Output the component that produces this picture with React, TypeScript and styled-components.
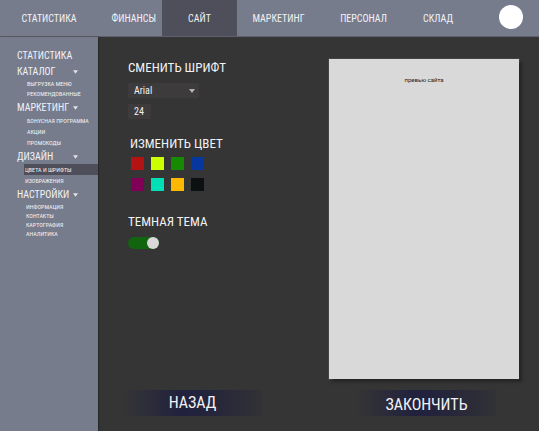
import React, { useState } from "react";
import styled, { createGlobalStyle } from "styled-components";

const GlobalStyle = createGlobalStyle`
  *, *::before, *::after { box-sizing: border-box; }
  body {
    margin: 0;
    background: #353535;
    color: #f2f2f4;
    font-family: "Roboto Condensed", "Roboto", sans-serif;
  }
  button, select, input { font-family: inherit; color: inherit; }
  a { color: inherit; text-decoration: none; }
`;

const Page = styled.div`
  min-height: 100vh;
  display: flex;
  flex-direction: column;
`;

const TopBar = styled.header`
  height: 37px;
  display: grid;
  grid-template-columns: 98fr 64fr 75fr 83fr 87fr 62fr 70fr;
  background: #777c8d;
  border-bottom: 1px solid #5e616c;
`;

const Tab = styled.a<{ $active?: boolean; $end?: boolean }>`
  display: flex;
  align-items: center;
  justify-content: ${(p) => (p.$end ? "flex-end" : "center")};
  padding-right: ${(p) => (p.$end ? "6px" : "0")};
  background: ${(p) => (p.$active ? "#4e4f5b" : "transparent")};
  font-size: 10px;
  white-space: nowrap;
`;

const Avatar = styled.button`
  width: 24px;
  height: 24px;
  margin: 5px 16px 0 auto;
  padding: 0;
  border: 0;
  border-radius: 50%;
  background: #fff;
`;

const Body = styled.div`
  flex: 1;
  display: flex;
`;

const Sidebar = styled.nav`
  flex: 0 0 98px;
  min-width: 0;
  display: flex;
  flex-direction: column;
  gap: 2px;
  padding-top: 12px;
  background: #777c8d;
  box-shadow: 1px 0 1px #292929;
`;

const GroupHead = styled.button`
  width: 100%;
  height: 14px;
  display: flex;
  align-items: center;
  justify-content: space-between;
  padding: 0 20px 0 17px;
  border: 0;
  background: none;
  font-size: 10px;
  line-height: 14px;
`;

const Caret = styled.svg`
  width: 5px;
  height: 4px;
  fill: #e2e2e6;
`;

const SubLink = styled.a<{ $row: number; $inset: number; $active?: boolean }>`
  display: block;
  height: ${(p) => p.$row}px;
  margin-left: 24px;
  padding-left: ${(p) => p.$inset}px;
  background: ${(p) => (p.$active ? "#4e4f5b" : "transparent")};
  font-size: 6px;
  line-height: ${(p) => p.$row}px;
  white-space: nowrap;
`;

const Main = styled.main`
  flex: 1;
  display: flex;
  flex-direction: column;
`;

const Workspace = styled.div`
  flex: 1;
  display: grid;
  grid-template-columns: 201fr 190fr;
  padding: 22px 20px 0 30px;
`;

const Settings = styled.div`
  display: flex;
  flex-direction: column;
  align-items: flex-start;
`;

const Section = styled.section<{ $palette?: boolean }>`
  display: flex;
  flex-direction: column;
  align-items: flex-start;
  gap: ${(p) => (p.$palette ? "4px" : "6px")};
  margin-bottom: ${(p) => (p.$palette ? "22px" : "16px")};
  padding-left: ${(p) => (p.$palette ? "2px" : "0")};
`;

const Heading = styled.h2`
  margin: 0;
  font-size: 13px;
  font-weight: 400;
  line-height: 18px;
`;

const SelectBox = styled.div`
  position: relative;
  width: 71px;
`;

const FontSelect = styled.select`
  display: block;
  width: 100%;
  height: 15px;
  padding: 0 6px;
  border: 0;
  border-radius: 0;
  appearance: none;
  background: #3e3b3d;
  font-size: 10px;
  line-height: 15px;
`;

const SelectCaret = styled(Caret)`
  position: absolute;
  right: 4px;
  top: 6px;
  width: 6px;
  fill: #b4b4b4;
  pointer-events: none;
`;

const SizeInput = styled.input`
  width: 23px;
  height: 15px;
  padding: 0 6px;
  border: 0;
  background: #3e3b3d;
  font-size: 10px;
`;

const Swatches = styled.div`
  display: grid;
  grid-template-columns: repeat(4, 13px);
  gap: 8px 7px;
  margin-left: 1px;
`;

const Swatch = styled.button<{ $color: string }>`
  height: 13px;
  padding: 0;
  border: 0;
  background: ${(p) => p.$color};
`;

const Switch = styled.input`
  appearance: none;
  width: 31px;
  height: 12px;
  margin: 0;
  padding: 0;
  display: flex;
  border-radius: 6px;
  background: #12650f;
  justify-content: flex-start;

  &:checked { justify-content: flex-end; }

  &::before {
    content: "";
    width: 12px;
    height: 12px;
    border-radius: 50%;
    background: #d9d9d9;
  }
`;

const Preview = styled.section`
  min-height: 320px;
  padding-top: 16px;
  background: #d9d9d9;
  box-shadow: 3px 3px 3px #252525, 0 0 0 1px #444;
  color: #222;
  font-family: "Roboto", sans-serif;
  font-size: 6px;
  line-height: 10px;
  text-align: center;
`;

const Actions = styled.footer`
  display: flex;
  justify-content: space-between;
  padding: 11px 42px 15px 24px;
`;

const ActionButton = styled.button<{ $low?: boolean }>`
  width: 141px;
  height: 26px;
  padding: ${(p) => (p.$low ? "3px" : "0")} 0 0;
  border: 0;
  background: linear-gradient(90deg, #353535 0%, #2c2c3a 20%, #21213e 42%, #23233c 56%, #313136 98%, #353535 100%);
  font-size: 16px;
  line-height: 22px;
`;

const tabs = ["СТАТИСТИКА", "ФИНАНСЫ", "САЙТ", "МАРКЕТИНГ", "ПЕРСОНАЛ", "СКЛАД"];

const groups = [
  { title: "СТАТИСТИКА", row: 10, inset: 3, items: [] as string[] },
  { title: "КАТАЛОГ", row: 10, inset: 3, items: ["ВЫГРУЗКА МЕНЮ", "РЕКОМЕНДОВАННЫЕ"] },
  { title: "МАРКЕТИНГ", row: 11, inset: 3, items: ["БОНУСНАЯ ПРОГРАММА", "АКЦИИ", "ПРОМОКОДЫ"] },
  { title: "ДИЗАЙН", row: 11, inset: 1, items: ["ЦВЕТА И ШРИФТЫ", "ИЗОБРАЖЕНИЯ"] },
  { title: "НАСТРОЙКИ", row: 9, inset: 2, items: ["ИНФОРМАЦИЯ", "КОНТАКТЫ", "КАРТОГРАФИЯ", "АНАЛИТИКА"] },
];

const colors = ["#b31312", "#ccff00", "#168a00", "#05379f", "#800058", "#00dfb5", "#ffb800", "#0d1010"];

export default function App() {
  const [dark, setDark] = useState(true);
  return (
    <Page>
      <GlobalStyle />
      <TopBar>
        {tabs.map((tab) => (
          <Tab key={tab} href="#" $active={tab === "САЙТ"} $end={tab === "ФИНАНСЫ"}>{tab}</Tab>
        ))}
        <Avatar aria-label="Профиль" />
      </TopBar>
      <Body>
        <Sidebar>
          {groups.map((group) => (
            <div key={group.title}>
              <GroupHead>
                {group.title}
                {group.items.length > 0 && (
                  <Caret viewBox="0 0 6 4" aria-hidden="true"><path d="M0 0h6L3 4z" /></Caret>
                )}
              </GroupHead>
              {group.items.map((item) => (
                <SubLink
                  key={item}
                  href="#"
                  $row={group.row}
                  $inset={group.inset}
                  $active={item === "ЦВЕТА И ШРИФТЫ"}
                >
                  {item}
                </SubLink>
              ))}
            </div>
          ))}
        </Sidebar>
        <Main>
          <Workspace>
            <Settings>
              <Section>
                <Heading id="font-title">СМЕНИТЬ ШРИФТ</Heading>
                <SelectBox>
                  <FontSelect aria-labelledby="font-title" defaultValue="Arial">
                    <option>Arial</option>
                  </FontSelect>
                  <SelectCaret viewBox="0 0 6 4" aria-hidden="true"><path d="M0 0h6L3 4z" /></SelectCaret>
                </SelectBox>
                <SizeInput aria-labelledby="font-title" defaultValue="24" />
              </Section>
              <Section $palette>
                <Heading>ИЗМЕНИТЬ ЦВЕТ</Heading>
                <Swatches>
                  {colors.map((color) => <Swatch key={color} $color={color} aria-label={color} />)}
                </Swatches>
              </Section>
              <Section>
                <Heading as="label" htmlFor="dark-theme">ТЕМНАЯ ТЕМА</Heading>
                <Switch id="dark-theme" type="checkbox" checked={dark} onChange={() => setDark(!dark)} />
              </Section>
            </Settings>
            <Preview>превью сайта</Preview>
          </Workspace>
          <Actions>
            <ActionButton>НАЗАД</ActionButton>
            <ActionButton $low>ЗАКОНЧИТЬ</ActionButton>
          </Actions>
        </Main>
      </Body>
    </Page>
  );
}
